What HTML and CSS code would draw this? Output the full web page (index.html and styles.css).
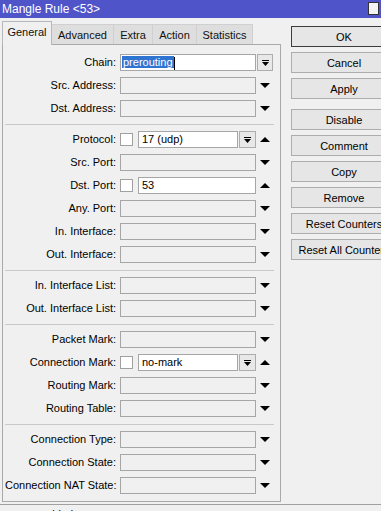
FILE: index.html
```html
<!DOCTYPE html>
<html lang="en">
<head>
    <meta charset="UTF-8">
    <title>Mangle Rule &lt;53&gt;</title>
    <link rel="stylesheet" href="styles.css">
</head>
<body>
    <div class="titlebar">
        <span class="title">Mangle Rule &lt;53&gt;</span>
        <span class="maxbox"></span>
    </div>

    <div class="main">
        <div class="left">
            <div class="tabs">
                <div class="tab active tab-general">General</div>
                <div class="tab tab-advanced">Advanced</div>
                <div class="tab tab-extra">Extra</div>
                <div class="tab tab-action">Action</div>
                <div class="tab tab-stats">Statistics</div>
            </div>

            <div class="panel">
                <div class="section">
                    <div class="row">
                        <label>Chain:</label>
                        <div class="field"><div class="input filled"><span class="sel">prerouting</span><span class="caret"></span></div></div>
                        <div class="side"><span class="dd"><svg width="7" height="6" viewBox="0 0 7 6"><rect x="0" y="0" width="7" height="1" fill="#000"/><polygon points="0,2 7,2 3.5,6" fill="#000"/></svg></span></div>
                    </div>
                    <div class="row">
                        <label>Src. Address:</label>
                        <div class="field"><div class="input"></div></div>
                        <div class="side"><span class="down"></span></div>
                    </div>
                    <div class="row">
                        <label>Dst. Address:</label>
                        <div class="field"><div class="input"></div></div>
                        <div class="side"><span class="down"></span></div>
                    </div>
                </div>

                <div class="section">
                    <div class="row">
                        <label>Protocol:</label>
                        <div class="field">
                            <span class="check"></span>
                            <div class="input filled">17 (udp)</div>
                            <span class="dd"><svg width="7" height="6" viewBox="0 0 7 6"><rect x="0" y="0" width="7" height="1" fill="#000"/><polygon points="0,2 7,2 3.5,6" fill="#000"/></svg></span>
                        </div>
                        <div class="side"><span class="up"></span></div>
                    </div>
                    <div class="row">
                        <label>Src. Port:</label>
                        <div class="field"><div class="input"></div></div>
                        <div class="side"><span class="down"></span></div>
                    </div>
                    <div class="row">
                        <label>Dst. Port:</label>
                        <div class="field">
                            <span class="check"></span>
                            <div class="input filled">53</div>
                        </div>
                        <div class="side"><span class="up"></span></div>
                    </div>
                    <div class="row">
                        <label>Any. Port:</label>
                        <div class="field"><div class="input"></div></div>
                        <div class="side"><span class="down"></span></div>
                    </div>
                    <div class="row">
                        <label>In. Interface:</label>
                        <div class="field"><div class="input"></div></div>
                        <div class="side"><span class="down"></span></div>
                    </div>
                    <div class="row">
                        <label>Out. Interface:</label>
                        <div class="field"><div class="input"></div></div>
                        <div class="side"><span class="down"></span></div>
                    </div>
                </div>

                <div class="section">
                    <div class="row">
                        <label>In. Interface List:</label>
                        <div class="field"><div class="input"></div></div>
                        <div class="side"><span class="down"></span></div>
                    </div>
                    <div class="row">
                        <label>Out. Interface List:</label>
                        <div class="field"><div class="input"></div></div>
                        <div class="side"><span class="down"></span></div>
                    </div>
                </div>

                <div class="section">
                    <div class="row">
                        <label>Packet Mark:</label>
                        <div class="field"><div class="input"></div></div>
                        <div class="side"><span class="down"></span></div>
                    </div>
                    <div class="row">
                        <label>Connection Mark:</label>
                        <div class="field">
                            <span class="check"></span>
                            <div class="input filled">no-mark</div>
                            <span class="dd"><svg width="7" height="6" viewBox="0 0 7 6"><rect x="0" y="0" width="7" height="1" fill="#000"/><polygon points="0,2 7,2 3.5,6" fill="#000"/></svg></span>
                        </div>
                        <div class="side"><span class="up"></span></div>
                    </div>
                    <div class="row">
                        <label>Routing Mark:</label>
                        <div class="field"><div class="input"></div></div>
                        <div class="side"><span class="down"></span></div>
                    </div>
                    <div class="row">
                        <label>Routing Table:</label>
                        <div class="field"><div class="input"></div></div>
                        <div class="side"><span class="down"></span></div>
                    </div>
                </div>

                <div class="section">
                    <div class="row">
                        <label>Connection Type:</label>
                        <div class="field"><div class="input"></div></div>
                        <div class="side"><span class="down"></span></div>
                    </div>
                    <div class="row">
                        <label>Connection State:</label>
                        <div class="field"><div class="input"></div></div>
                        <div class="side"><span class="down"></span></div>
                    </div>
                    <div class="row">
                        <label>Connection NAT State:</label>
                        <div class="field"><div class="input"></div></div>
                        <div class="side"><span class="down"></span></div>
                    </div>
                </div>
            </div>
        </div>

        <div class="buttons">
            <button class="default">OK</button>
            <button>Cancel</button>
            <button>Apply</button>
            <button class="spaced">Disable</button>
            <button>Comment</button>
            <button>Copy</button>
            <button>Remove</button>
            <button>Reset Counters</button>
            <button>Reset All Counters</button>
        </div>
    </div>

    <div class="status">enabled</div>
</body>
</html>
```

FILE: styles.css
```css
html, body {
    margin: 0;
    width: 381px;
    height: 511px;
    overflow: hidden;
}
body {
    background: #f0f0f0;
    font-family: "Liberation Sans", Arial, sans-serif;
    font-size: 11px;
    color: #000;
}

.titlebar {
    height: 18px;
    background: #4f54c9;
    color: #fff;
    display: flex;
    align-items: center;
    justify-content: space-between;
    padding: 0 2px;
    font-size: 12px;
}
.maxbox {
    width: 9px;
    height: 11px;
    border: 1px solid #333;
    background: #f4f4f4;
    margin-bottom: 2px;
}

.main {
    display: flex;
    gap: 10px;
}
.left {
    margin-left: 2px;
    width: 279px;
    flex: none;
}

.tabs {
    display: flex;
    align-items: flex-end;
    height: 26px;
}
.tab {
    height: 20px;
    line-height: 20px;
    box-sizing: border-box;
    text-align: center;
    background: #dedede;
    border: 1px solid #d0d0d0;
    border-bottom: none;
    border-left: none;
    color: #111;
}
.tab.active {
    height: 24px;
    line-height: 21px;
    background: #f0f0f0;
    border-color: #b8b8b8;
    border-left: 1px solid #b8b8b8;
    margin-bottom: -1px;
    position: relative;
}
.tab-general { width: 50px; }
.tab-advanced { width: 62px; }
.tab-extra { width: 39px; }
.tab-action { width: 44px; }
.tab-stats { width: 56px; }

.panel {
    border: 1px solid #a9a9a9;
    padding-top: 3px;
    box-sizing: border-box;
    height: 458px;
}
.section {
    margin: 0 6px 0 2px;
    padding: 6px 0 7px;
    border-bottom: 1px solid #c9c9c9;
    display: flex;
    flex-direction: column;
    gap: 6px;
}
.section:last-child {
    border-bottom: none;
}

.row {
    display: flex;
    height: 17px;
    align-items: center;
}
.row label {
    width: 111px;
    text-align: right;
    margin-right: 4px;
    line-height: 17px;
    white-space: nowrap;
}
.field {
    width: 136px;
    height: 17px;
    display: flex;
    align-items: center;
}
.side {
    width: 16px;
    margin-left: 1px;
    height: 17px;
    display: flex;
    align-items: center;
    justify-content: center;
}

.input {
    flex: 1;
    height: 17px;
    box-sizing: border-box;
    border: 1px solid #a6a6a6;
    background: #f0f0f0;
    line-height: 15px;
    padding-left: 3px;
    white-space: nowrap;
    overflow: hidden;
}
.input.filled {
    background: #fff;
}
.sel {
    background: #2f74d0;
    color: #fff;
    margin-left: -2px;
    padding: 0 1px;
}
.caret {
    display: inline-block;
    width: 1px;
    height: 13px;
    background: #000;
    vertical-align: middle;
}

.check {
    width: 13px;
    height: 13px;
    box-sizing: border-box;
    border: 1px solid #a0a0a0;
    background: #fff;
    margin-right: 5px;
    flex: none;
}

.dd {
    width: 16px;
    height: 17px;
    box-sizing: border-box;
    border: 1px solid #adadad;
    background: #e8e8e8;
    display: flex;
    align-items: center;
    justify-content: center;
    flex: none;
}
.field .dd {
    width: 17px;
    margin-left: 1px;
}

.down {
    width: 0;
    height: 0;
    border-left: 5px solid transparent;
    border-right: 5px solid transparent;
    border-top: 5px solid #000;
}
.up {
    width: 0;
    height: 0;
    border-left: 5px solid transparent;
    border-right: 5px solid transparent;
    border-bottom: 5px solid #000;
}

.buttons {
    padding-top: 8px;
    display: flex;
    flex-direction: column;
    gap: 5px;
    flex: none;
}
.buttons button {
    width: 106px;
    height: 21px;
    border: 1px solid #adadad;
    background: #e6e6e6;
    font-family: "Liberation Sans", Arial, sans-serif;
    font-size: 11px;
    color: #000;
    padding: 0;
    margin: 0;
    white-space: nowrap;
    text-align: center;
    box-sizing: border-box;
}
.buttons button.default {
    border-color: #3c3c3c;
}
.buttons button.spaced {
    margin-top: 5px;
}

.status {
    margin-top: 2px;
    border-top: 1px solid #a0a0a0;
    padding: 3px 0 0 34px;
}
```
